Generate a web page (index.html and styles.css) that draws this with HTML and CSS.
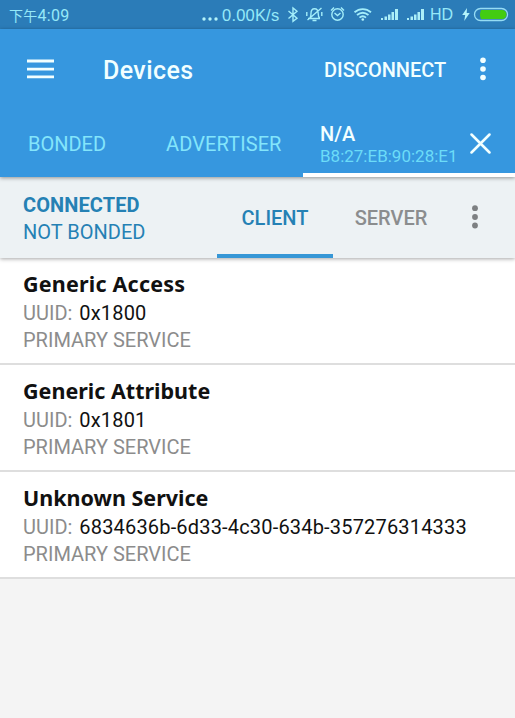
FILE: index.html
```html
<!DOCTYPE html>
<html lang="en">
<head>
<meta charset="utf-8">
<title>Devices</title>
<link rel="stylesheet" href="styles.css">
</head>
<body>
<div class="status">
  <span class="time"><span class="cjk">下午</span>4:09</span>
  <svg class="dots" width="16" height="4" viewBox="0 0 16 4"><circle cx="2" cy="2" r="1.7"/><circle cx="8" cy="2" r="1.7"/><circle cx="14" cy="2" r="1.7"/></svg>
  <span class="speed">0.00K/s</span>
  <svg class="status-icons" width="88" height="20" viewBox="287 5 88 20">
    <path d="M288.500 11 297 18.200 293 21.300V8L297 11.300 288.500 18.500"/>
    <path d="M308 18.500h12M309.800 18c1.200-1 1.200-2.500 1.200-4.500 0-3 1.300-4.800 3.500-4.800s3.700 1.800 3.700 4.800c0 2 .200 3.500 1.400 4.500M312.500 20.500h4M321.500 8l-14 12M306.800 12v4M321.800 12v4"/>
    <circle cx="337.500" cy="14.500" r="5.700"/><path d="M334.500 13l3 2.500 3-2.500M331 10.500l3-3M344 10.500l-3-3"/>
    <path class="wifi" d="M354.500 12.200c5-4.200 11.500-4.200 16.500 0M357 15c3.500-2.800 8-2.800 11.500 0M359.500 17.600c2-1.600 4.500-1.600 6.500 0"/><circle class="solid" cx="362.800" cy="19.500" r="1.300"/>
  </svg>
  <svg class="signal" width="18" height="12" viewBox="0 0 18 12"><path d="M0 10h2v2H0zM3.500 8.500h2.500V12h-2.500zM7 6.500h2.500V12H7zM10.500 4h2.500v8h-2.500zM14 1h3v11h-3z"/></svg>
  <svg class="signal second" width="18" height="12" viewBox="0 0 18 12"><path d="M0 10h2v2H0zM3.500 8.500h2.500V12h-2.500zM7 6.500h2.500V12H7zM10.500 4h2.500v8h-2.500zM14 1h3v11h-3z"/></svg>
  <span class="hd">HD</span>
  <svg class="battery" width="48" height="16" viewBox="461 6 48 16"><path class="solid" d="M467 8l-4.800 7h3l-1 6 5.500-8h-3z"/><rect x="474.500" y="8.500" width="33" height="12" rx="6"/><path class="charge" d="M481 10h21a4.500 4.500 0 0 1 0 9h-21q-2-4.500 0-9z"/></svg>
</div>
<header class="top">
  <div class="appbar">
    <svg class="menu" width="27" height="20" viewBox="0 0 27 20"><path d="M0 2h27M0 10.200h27M0 17.800h27"/></svg>
    <h1>Devices</h1>
    <span class="disconnect">DISCONNECT</span>
    <svg class="more" width="6" height="24" viewBox="0 0 6 24"><circle cx="3" cy="3.200" r="2.800"/><circle cx="3" cy="12" r="2.800"/><circle cx="3" cy="20.500" r="2.800"/></svg>
  </div>
  <nav class="tabs">
    <span class="tab bonded">BONDED</span>
    <span class="tab advertiser">ADVERTISER</span>
    <div class="tab active">
      <div class="device"><span class="name">N/A</span><span class="mac">B8:27:EB:90:28:E1</span></div>
      <svg class="close" width="21" height="21" viewBox="0 0 21 21"><path d="M1.500 1.500l18 18M19.500 1.500l-18 18"/></svg>
    </div>
  </nav>
</header>
<section class="connection">
  <div class="state"><strong>CONNECTED</strong><span>NOT BONDED</span></div>
  <span class="role client">CLIENT</span>
  <span class="role server">SERVER</span>
  <svg class="more grey" width="6" height="24" viewBox="0 0 6 24"><circle cx="3" cy="3.200" r="2.900"/><circle cx="3" cy="12" r="2.900"/><circle cx="3" cy="20.500" r="2.900"/></svg>
</section>
<main>
  <article class="service"><h2 class="access">Generic Access</h2><p>UUID: <b>0x1800</b></p><p>PRIMARY SERVICE</p></article>
  <article class="service"><h2>Generic Attribute</h2><p>UUID: <b>0x1801</b></p><p>PRIMARY SERVICE</p></article>
  <article class="service"><h2>Unknown Service</h2><p>UUID: <b>6834636b-6d33-4c30-634b-357276314333</b></p><p>PRIMARY SERVICE</p></article>
</main>
</body>
</html>
```
FILE: styles.css
```css
* { box-sizing: border-box; }
body { margin: 0; width: 515px; height: 718px; overflow: hidden; background: #f4f4f4; font-family: Roboto, sans-serif; font-size: 20px; }
h1, h2, p { margin: 0; }
svg { flex: none; fill: none; }
span, h1, h2, p { white-space: nowrap; }

.status { display: flex; align-items: center; height: 29px; padding-top: 1px; background: #2b7cb8; color: #96e9f8; font-family: "Liberation Sans", sans-serif; font-size: 16px; }
.time { width: 193px; padding-left: 9px; font-family: Roboto, sans-serif; letter-spacing: .35px; }
.cjk { font-family: "Noto Sans CJK SC", sans-serif; font-size: 14px; font-weight: 400; line-height: 1; letter-spacing: .2px; }
.dots { fill: #b5f4fa; margin: 7px 4px 0 9px; }
.speed { width: 65px; font-size: 16.500px; letter-spacing: .2px; }
.status-icons { stroke: #a3eefa; stroke-width: 1.400; margin-top: -1px; }
.status-icons .wifi { stroke-width: 1.800; }
.status .solid { fill: #b5f4fa; stroke: none; }
.signal { fill: #aceff8; margin-left: 6px; margin-top: -2px; }
.signal.second { margin-left: 8px; }
.hd { margin-left: 5px; width: 26px; }
.battery { stroke: #96dcf4; stroke-width: 1.300; margin-left: 5px; margin-top: -2px; }
.battery .charge { fill: #43cc12; stroke: none; }

.top { position: relative; z-index: 2; height: 148px; background: #3697df; color: #f2ffff; box-shadow: 0 1px 4px rgba(0,0,0,.4); }
.appbar { display: flex; align-items: center; height: 81px; padding-left: 27px; }
.menu { stroke: #f2ffff; stroke-width: 2.800; margin-top: -2px; }
h1 { width: 221px; margin: 2px 0 0 49px; font-size: 25px; font-weight: 500; line-height: 30px; letter-spacing: .4px; }
.disconnect { width: 156px; font-weight: 500; }
.more { fill: #f2ffff; margin-top: -1px; }
.tabs { display: flex; height: 67px; line-height: 69px; color: #83e5fb; }
.bonded { width: 138px; padding-left: 28px; }
.advertiser { width: 165px; padding-left: 28px; letter-spacing: .1px; }
.active { display: flex; width: 212px; padding-left: 17px; border-bottom: 4px solid #fff; }
.device { display: flex; flex-direction: column; width: 150px; padding-top: 13px; }
.name { color: #f2ffff; font-weight: 500; line-height: 23px; }
.mac { font-size: 17px; line-height: 21px; color: #6cdcf8; }
.close { margin-top: 23px; stroke: #f2ffff; stroke-width: 2.500; stroke-linecap: round; }

.connection { position: relative; z-index: 1; display: flex; align-items: center; height: 81px; background: #edf2f4; box-shadow: 0 1px 4px rgba(0,0,0,.35); }
.state { display: flex; flex-direction: column; width: 217px; padding: 2px 0 0 23px; line-height: 27px; color: #2581b4; }
.state strong { letter-spacing: .1px; }
.role { height: 81px; line-height: 82px; font-weight: 500; text-align: center; }
.client { width: 116px; color: #2581b4; border-bottom: 4px solid #3697d6; }
.server { width: 116px; color: #8b8d8e; }
.grey { margin-left: 23px; fill: #7d8082; }

main { background: #fff; }
.service { height: 107px; padding: 11px 23px 0; border-bottom: 2px solid #dedede; }
h2 { margin-bottom: 1px; font-family: "Noto Sans", sans-serif; font-size: 21.500px; line-height: 30px; font-weight: 700; color: #111; }
.access { letter-spacing: .2px; }
.service p { line-height: 27px; color: #8c8c8c; }
.service b { font-weight: 400; color: #111; margin-left: 2px; letter-spacing: .18px; }
```
